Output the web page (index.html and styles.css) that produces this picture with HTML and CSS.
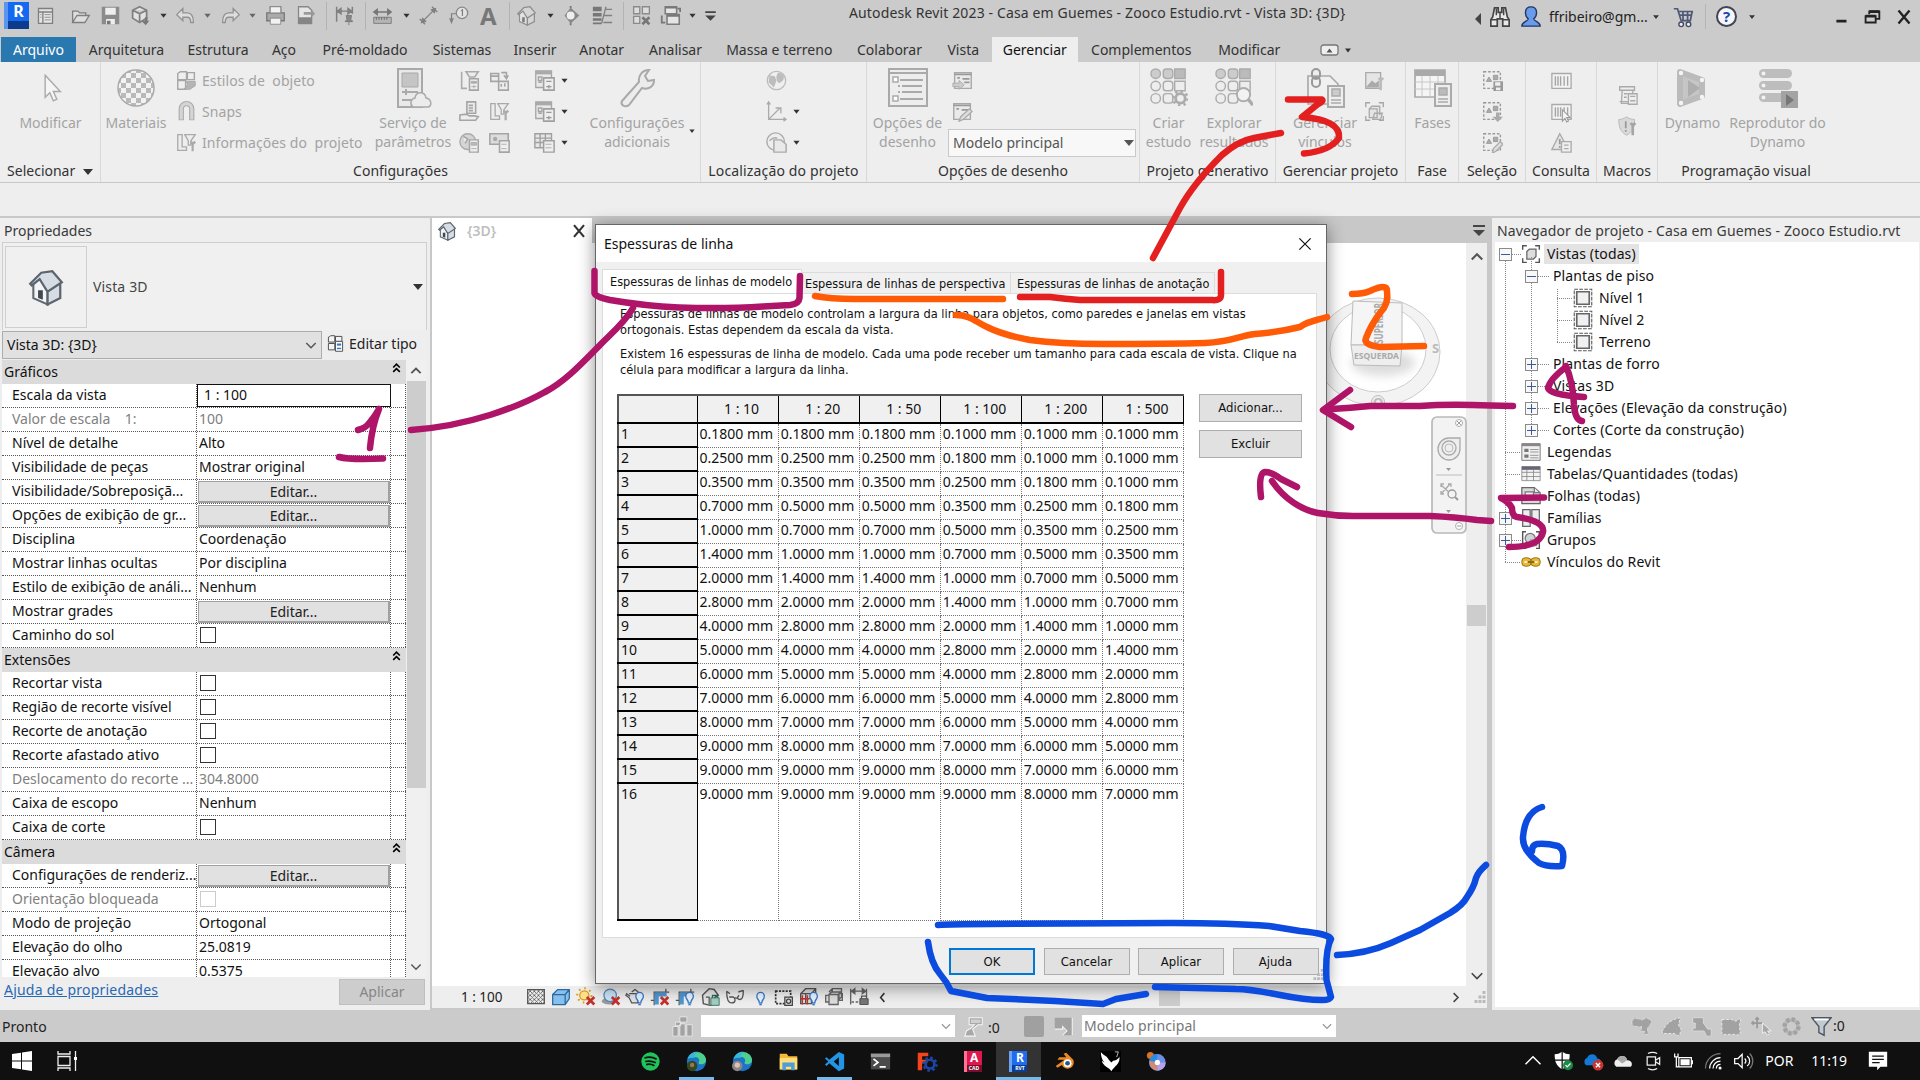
FILE: index.html
```html
<!DOCTYPE html>
<html lang="pt-BR">
<head>
<meta charset="utf-8">
<title>Autodesk Revit 2023</title>
<link rel="stylesheet" href="styles.css">
</head>
<body>
<svg class="sprite" aria-hidden="true">
  <symbol id="dd" viewBox="0 0 24 24"><path d="M8.500 10h7l-3.500 4.500z" fill="currentColor"/></symbol>
  <symbol id="props" viewBox="0 0 24 24"><path d="M4 4h16v17H4zM4 8h16M9 8v13" fill="#e4e4e4" stroke="#7f7f7f" stroke-width="1.500"/><path d="M11 11h7M11 14h7M11 17h7M6 11h1.500M6 14h1.500" stroke="#888"/></symbol>
  <symbol id="open" viewBox="0 0 24 24"><path d="M3 20V7h6l2 2h7v3M3 20l5-8h14l-5 8z" fill="#dedede" stroke="#7f7f7f" stroke-width="1.500"/></symbol>
  <symbol id="save" viewBox="0 0 24 24"><path d="M2 2h20v20H2z" fill="#8b8b8b"/><path d="M6 3h12v8H6zM7 16h10v6H7z" fill="#eee"/><path d="M8 18h4v4H8z" fill="#777"/></symbol>
  <symbol id="cube" viewBox="0 0 24 24"><path d="M11 2l8 4v9l-8 5-8-5V6zM3 6l8 4 8-4M11 10v10" fill="#e2e2e2" stroke="#808080" stroke-width="2"/><path d="M13 18h4v-4h3v4h2l-4 5z" fill="#777"/></symbol>
  <symbol id="undo" viewBox="0 0 24 24"><path d="M9 4L2 11l7 7v-4h5c3 0 4 2 4 6h3c0-8-2-11-7-11H9z" fill="#ddd" stroke="#929292" stroke-width="1.500"/></symbol>
  <symbol id="redo" viewBox="0 0 24 24"><path d="M15 4l7 7-7 7v-4h-5c-3 0-4 2-4 6H3c0-8 2-11 7-11h5z" fill="#ddd" stroke="#929292" stroke-width="1.500"/></symbol>
  <symbol id="print" viewBox="0 0 24 24"><path d="M6 9V2h12v7M2 9h20v9H2z" fill="#aaa" stroke="#777" stroke-width="1.500"/><path d="M6 2h12v7H6zM6 15h12v7H6z" fill="#f2f2f2" stroke="#888"/></symbol>
  <symbol id="pdf" viewBox="0 0 24 24"><path d="M4 2h11l4 4v15H4z" fill="#e5e5e5" stroke="#888" stroke-width="1.500"/><path d="M4 14h15v8H4z" fill="#858585"/><path d="M10 8h9V5l4 5-4 4v-3h-9z" fill="#9a9a9a"/></symbol>
  <symbol id="dimlock" viewBox="0 0 24 24"><path d="M3 2v17M21 2v8M4 7h16M4 7l4-3v6zM20 7l-4-3v6z" fill="#888" stroke="#808080" stroke-width="1.700"/><path d="M14 12h6l-1 6h2v1h-8v-1h2zM17 19v4" fill="#888" stroke="#777"/></symbol>
  <symbol id="ruler" viewBox="0 0 24 24"><path d="M2 8h20M2 8l4-3v6zM22 8l-4-3v6z" fill="#777" stroke="#777" stroke-width="1.500"/><path d="M2 14h20v7H2z" fill="#b5b5b5" stroke="#777"/><path d="M5 14v3M8 14v3M11 14v3M14 14v3M17 14v3" stroke="#666"/></symbol>
  <symbol id="diag" viewBox="0 0 24 24"><path d="M5 19L19 5M2 16l6 6M16 2l6 6" stroke="#808080" stroke-width="1.600"/><path d="M3 21l2-7 5 5zM21 3l-7 2 5 5z" fill="#808080"/></symbol>
  <symbol id="tag" viewBox="0 0 24 24"><circle cx="16" cy="9" r="6.500" fill="#e2e2e2" stroke="#888" stroke-width="1.500"/><path d="M15 6.500l1.500-1v7M9 10H4v9M2 15l2 5 2-5" fill="none" stroke="#808080" stroke-width="1.400"/></symbol>
  <symbol id="home" viewBox="0 0 24 24"><path d="M4 10v9l9 4 8-5v-8l-6-7-6 1z" fill="#cbd3dc"/><path d="M4 10v9l9 4v-8L8 6z" fill="#f2f4f6" stroke="#606870" stroke-width="1.300"/><path d="M2 10l7-7 7-1 6 7-9 6-5-8-5 4zM13 15v8l8-4V10" fill="#d6dde5" stroke="#5c656e" stroke-width="1.400"/><path d="M7 14h3v6l-3-1z" fill="#42484e"/></symbol>
  <symbol id="section" viewBox="0 0 24 24"><path d="M11 1v3M11 20v3" stroke="#777" stroke-width="2"/><path d="M4 12l7-9 10 9-10 9z" fill="#888"/><circle cx="11" cy="12" r="4.500" fill="#eee"/></symbol>
  <symbol id="thin" viewBox="0 0 24 24"><path d="M1 2h10v5H1zM1 9h10v4H1zM1 15h10v3H1zM1 20h10v2H1z" fill="#777"/><path d="M15 5h8M13 12h10M13 20h10M11 21l5-19" stroke="#808080" stroke-width="1.500" fill="none"/></symbol>
  <symbol id="wins" viewBox="0 0 24 24"><path d="M3 2h7v8H3zM13 2h8v8h-8zM3 13h7v8H3z" fill="#ddd" stroke="#8b8b8b" stroke-width="1.500"/><path d="M13 14l8 8M21 14l-8 8" stroke="#777" stroke-width="3"/></symbol>
  <symbol id="switch" viewBox="0 0 24 24"><path d="M6 2h13v8H6zM8 11h14v11H8z" fill="#e5e5e5" stroke="#7d7d7d" stroke-width="1.800"/><path d="M8 12.500h14M6 3h13M2 12v8h4M23 8V4h-3" stroke="#777" stroke-width="2" fill="none"/></symbol>
  <symbol id="custom" viewBox="0 0 24 24"><path d="M6 7h12v2H6zM6 12h12l-6 6z" fill="#444"/></symbol>
  <symbol id="arrow" viewBox="0 0 24 24"><path d="M7 1v19l4-4 3 7 3-1.500-3-6.500h6z" fill="#f5f5f5" stroke="#a9a9a9" stroke-width="1.200"/></symbol>
  <symbol id="ball" viewBox="0 0 40 40"><defs><pattern id="chk" width="10" height="10" patternUnits="userSpaceOnUse"><path d="M0 0h5v5H0zM5 5h5v5H5z" fill="#b9b9b9"/><path d="M5 0h5v5H5zM0 5h5v5H0z" fill="#f2f2f2"/></pattern></defs><circle cx="20" cy="20" r="18" fill="url(#chk)" stroke="#aaa" stroke-width="1.500"/></symbol>
  <symbol id="style" viewBox="0 0 24 24"><path d="M2 4l3-2h7v9H2zM13 3h8v8h-8zM2 12h9v10H2z" fill="#eee" stroke="#a5a5a5" stroke-width="1.600"/><path d="M12 13h10v5l-6 4H9l4-5z" fill="#b5b5b5" stroke="#a5a5a5"/></symbol>
  <symbol id="magnet" viewBox="0 0 24 24"><path d="M6 22V9a6 6 0 0 1 12 0v13" fill="none" stroke="#aaa" stroke-width="6"/><path d="M6 21V9a6 6 0 0 1 12 0v12" fill="none" stroke="#d5d5d5" stroke-width="3.500"/></symbol>
  <symbol id="info" viewBox="0 0 24 24"><path d="M2 3h5v14h5v4H2zM10 3h12l-5 7v5h-3v-5z" fill="#ededed" stroke="#aaa" stroke-width="1.500"/><path d="M19 11v11M17 11l2 3 3-3" stroke="#aaa" stroke-width="2.500" fill="none"/></symbol>
  <symbol id="server" viewBox="0 0 40 40"><path d="M5 1h24v38H5z" fill="#e9e9e9" stroke="#a9a9a9" stroke-width="2"/><path d="M9 5h16v14H9z" fill="#c5c5c5" stroke="#a9a9a9"/><path d="M9 24h16M9 32h10M13 21v6" stroke="#aaa" stroke-width="2"/><path d="M20 39a5 5 0 0 1 2-9c1-7 10-7 11 0 6 1 6 8 2 9z" fill="#ececec" stroke="#aaa" stroke-width="1.500"/></symbol>
  <symbol id="s1" viewBox="0 0 24 24"><path d="M3 2v19h6M8 2h14l-4 6h-6z" fill="#ededed" stroke="#aaa" stroke-width="1.800"/><path d="M12 10h10v13H12z" fill="#eee" stroke="#a5a5a5" stroke-width="1.800"/><path d="M14 13h6v2h-6zM14 19h6M17 17v4" stroke="#aaa" fill="#aaa"/></symbol>
  <symbol id="s2" viewBox="0 0 24 24"><path d="M2 4h9v9H2zM2 7h9M11 13h11v10H11zM14 16v3M18 15v4M14 3h6v6M17 6l3 4 2-4" fill="#ededed" stroke="#a5a5a5" stroke-width="1.800"/></symbol>
  <symbol id="s3" viewBox="0 0 24 24"><path d="M9 1h10v13H9zM11 5h5M11 8h5M11 11h5M1 16l7-1 4 2h6l4 1-3 4H1z" fill="#ededed" stroke="#a5a5a5" stroke-width="1.800"/></symbol>
  <symbol id="s4" viewBox="0 0 24 24"><circle cx="10" cy="11" r="9" fill="#d4d4d4" stroke="#aaa" stroke-width="1.500"/><path d="M5 5l5 3-3 5M12 9h10v14H12z" fill="#eee" stroke="#a5a5a5" stroke-width="1.700"/><path d="M14 12h6v3h-6zM14 19h6" stroke="#aaa" fill="#bbb"/></symbol>
  <symbol id="s5" viewBox="0 0 24 24"><path d="M1 2h21v12H1z" fill="#ddd" stroke="#a5a5a5" stroke-width="1.800"/><circle cx="7" cy="8" r="2.500" fill="#aaa"/><path d="M12 10h11v13H12z" fill="#eee" stroke="#a5a5a5" stroke-width="1.800"/><path d="M14 14h6M14 19h6" stroke="#aaa"/></symbol>
  <symbol id="s6" viewBox="0 0 24 24"><path d="M1 2h19v16H1zM1 7h19M7 2v16M13 2v16M1 12h19" fill="#e6e6e6" stroke="#a0a0a0" stroke-width="1.600"/><path d="M11 10h12v13H11z" fill="#eee" stroke="#a0a0a0" stroke-width="1.700"/><path d="M13 14h7M13 18h7" stroke="#aaa"/></symbol>
  <symbol id="s7" viewBox="0 0 24 24"><path d="M2 1h18v19H2z" fill="#e9e9e9" stroke="#a5a5a5" stroke-width="1.500"/><path d="M2 1h18v4H2z" fill="#aaa"/><path d="M5 8h4v4H5zM5 14h4" fill="none" stroke="#a5a5a5" stroke-width="1.500"/><path d="M11 9h12v14H11z" fill="#eee" stroke="#a0a0a0" stroke-width="1.800"/><path d="M14 13h6M14 19h6M17 17v4" stroke="#999" stroke-width="1.500"/></symbol>
  <symbol id="wrench" viewBox="0 0 40 40"><path d="M5 33l17-19c-1-6 3-12 10-12l-4 6 3 5 6-1c0 7-6 10-12 8L12 37c-4 3-9 0-7-4z" fill="#ececec" stroke="#a9a9a9" stroke-width="2"/></symbol>
  <symbol id="globe" viewBox="0 0 24 24"><circle cx="12" cy="12" r="10.500" fill="#efefef" stroke="#bbb" stroke-width="1.500"/><path d="M4 6l6 1 2 5-3 8-6-6zM14 3c9 1 8 9 1 12-4-3-4-9-1-12z" fill="#bdbdbd"/></symbol>
  <symbol id="axes" viewBox="0 0 24 24"><path d="M3 2v19h20M3 21L16 8M11 8h6v6M1 4l2-3 2 3M20 19l3 2-3 2" stroke="#aaa" stroke-width="1.500" fill="none"/></symbol>
  <symbol id="pospage" viewBox="0 0 24 24"><circle cx="11" cy="11" r="10" fill="#eee" stroke="#aaa" stroke-width="1.600"/><path d="M9 9h8l6 5v9H9zM4 10c4-4 6-4 9-3" fill="#e9e9e9" stroke="#aaa" stroke-width="1.700"/></symbol>
  <symbol id="optlist" viewBox="0 0 40 40"><path d="M1 1h38v37H1z" fill="#ededed" stroke="#a9a9a9" stroke-width="2"/><path d="M2 5h36" stroke="#aaa" stroke-width="2"/><path d="M5 9h5v5H5zM5 28h5v5H5z" fill="#fff" stroke="#aaa" stroke-width="1.500"/><path d="M12 12h23M14 18h20M14 24h20M12 31h23M10 18h2M10 24h2" stroke="#aaa" stroke-width="1.800"/></symbol>
  <symbol id="optin" viewBox="0 0 24 24"><path d="M3 3h19v18H3z" fill="#eaeaea" stroke="#a9a9a9" stroke-width="1.600"/><path d="M3 5h19M6 9h3M12 10h8M14 14h6" stroke="#999" stroke-width="2"/><path d="M1 15h7v-3l6 5-6 5v-3H1z" fill="#ccc" stroke="#aaa"/></symbol>
  <symbol id="optedit" viewBox="0 0 24 24"><path d="M2 3h19v18H2z" fill="#eaeaea" stroke="#a9a9a9" stroke-width="1.600"/><path d="M2 5h19M5 9h3M11 10h8" stroke="#999" stroke-width="2"/><path d="M8 23l2-5 10-9 3 3-10 9z" fill="#ddd" stroke="#aaa" stroke-width="1.500"/></symbol>
  <symbol id="nine" viewBox="0 0 40 40"><g fill="#ededed" stroke="#acacac" stroke-width="1.500"><circle cx="6" cy="6" r="5" fill="#ccc"/><rect x="14" y="1" width="10" height="10" rx="3" fill="#ccc"/><path d="M26 1h11v10H26z" fill="#bbb"/><circle cx="6" cy="19" r="5"/><rect x="14" y="14" width="10" height="10" rx="3"/><path d="M26 14h11v10H26z"/><circle cx="6" cy="32" r="5"/><rect x="14" y="27" width="10" height="10" rx="3"/></g></symbol>
  <symbol id="gear" viewBox="0 0 40 40"><circle cx="32" cy="32" r="5" fill="#eee" stroke="#acacac" stroke-width="3"/><circle cx="32" cy="32" r="7.500" fill="none" stroke="#acacac" stroke-width="3" stroke-dasharray="2.500 3.400"/></symbol>
  <symbol id="lens" viewBox="0 0 40 40"><circle cx="30" cy="28" r="7" fill="#f2f2f2" stroke="#acacac" stroke-width="2"/><path d="M35 33l5 6" stroke="#aaa" stroke-width="3.500"/></symbol>
  <symbol id="links" viewBox="0 0 40 40"><path d="M3 36V8h22l8 8v20z" fill="#f0f0f0" stroke="#aaa" stroke-width="1.700"/><rect x="7" y="1" width="8" height="10" rx="4" fill="none" stroke="#999" stroke-width="2"/><rect x="7" y="9" width="8" height="10" rx="4" fill="none" stroke="#999" stroke-width="2"/><path d="M23 18h16v21H23z" fill="#eee" stroke="#aaa" stroke-width="2"/><path d="M27 21h8v7h-8zM26 32h10M26 35h10" stroke="#aaa" stroke-width="1.500" fill="#ccc"/></symbol>
  <symbol id="pic" viewBox="0 0 24 24"><path d="M2 3h17v18H2z" fill="#e5e5e5" stroke="#aaa" stroke-width="1.500"/><path d="M2 20l7-8 4 3 4-3v8z" fill="#aaa"/><path d="M19 9v14M17 9l2 3 3-3" stroke="#bbb" stroke-width="3" fill="none"/></symbol>
  <symbol id="boxin" viewBox="0 0 24 24"><path d="M2 7V2h5M17 2h5v5M22 17v5h-5M7 22H2v-5" stroke="#a5a5a5" stroke-width="1.500" fill="none"/><path d="M6 9h9v10H6zM6 9l3-3h9v10M12 14h9l-2 7h-9z" fill="#e5e5e5" stroke="#aaa" stroke-width="1.500"/></symbol>
  <symbol id="phase" viewBox="0 0 40 40"><path d="M2 2h30v27H2z" fill="#f5f5f5" stroke="#aaa" stroke-width="1.700"/><path d="M2 2h30v6H2z" fill="#aaa"/><path d="M2 14h30M2 21h30M9 8v21M17 8v21M25 8v21" stroke="#c8c8c8"/><path d="M22 16h16v22H22z" fill="#eee" stroke="#aaa" stroke-width="2"/><path d="M26 20h8v7h-8zM25 31h10M25 34h10" fill="#bbb" stroke="#aaa" stroke-width="1.400"/></symbol>
  <symbol id="sel" viewBox="0 0 24 24"><path d="M2 2h19v19H2z" fill="none" stroke="#999" stroke-width="1.600" stroke-dasharray="3 2"/><path d="M5 13l3-5 3 5zM13 6h5v5h-5z" fill="#aaa" stroke="#999"/></symbol>
  <symbol id="selsave" viewBox="0 0 24 24"><path d="M13 13h11v11H13z" fill="#999"/><path d="M15 14h6v4h-6zM16 20h5v3h-5z" fill="#eee"/></symbol>
  <symbol id="seldown" viewBox="0 0 24 24"><path d="M16 13h4v5h4l-6 6-6-6h4z" fill="#aaa"/></symbol>
  <symbol id="seledit" viewBox="0 0 24 24"><path d="M12 24l1-5 8-8 3 3-8 8z" fill="#ddd" stroke="#aaa" stroke-width="1.500"/></symbol>
  <symbol id="bar" viewBox="0 0 24 24"><path d="M1 4h22v17H1z" fill="#f3f3f3" stroke="#aaa" stroke-width="1.500"/><path d="M5 7v11M8 7v11M11 7v11M15 7v11M19 7v11" stroke="#a5a5a5" stroke-width="1.600"/></symbol>
  <symbol id="warn" viewBox="0 0 24 24"><path d="M10 2l10 18H1z" fill="#e6e6e6" stroke="#aaa" stroke-width="1.600"/><path d="M10 8v6M10 16v2" stroke="#999" stroke-width="2"/><path d="M12 11h11v12H12z" fill="#eee" stroke="#aaa" stroke-width="1.500"/><path d="M15 15h5M15 19h5" stroke="#aaa" stroke-width="1.500"/></symbol>
  <symbol id="macro" viewBox="0 0 24 24"><path d="M3 2h17v4H3zM6 6l-1 15h10M18 6v5" fill="#eee" stroke="#aaa" stroke-width="1.500"/><path d="M13 10h10v12H13z" fill="#eee" stroke="#aaa" stroke-width="1.500"/><path d="M3 19h10M8 10h4M8 14h3M15 13h6M15 18h6" stroke="#aaa" stroke-width="1.700"/></symbol>
  <symbol id="shieldw" viewBox="0 0 24 24"><path d="M11 1c3 2 6 3 9 3 0 9-2 14-9 18C4 18 2 13 2 4c3 0 6-1 9-3z" fill="#d9d9d9" stroke="#b5b5b5"/><path d="M10 6v8M10 16v2" stroke="#999" stroke-width="2"/><path d="M18 8v14M15.500 8l2.500 3 3-3" stroke="#a5a5a5" stroke-width="3" fill="none"/></symbol>
  <symbol id="dynamo" viewBox="0 0 40 40"><path d="M7 4l22 8v16L7 36z" fill="#c6c6c6" stroke="#bbb" stroke-width="6" stroke-linejoin="round"/><path d="M15 12l12 8-12 9z" fill="#aeaeae"/><g fill="#f5f5f5"><circle cx="8" cy="5" r="2.200"/><circle cx="29" cy="12" r="2.200"/><circle cx="29" cy="29" r="2.200"/><circle cx="8" cy="35" r="2.200"/></g></symbol>
  <symbol id="player" viewBox="0 0 40 40"><g fill="#bdbdbd"><rect x="1" y="1" width="33" height="9" rx="4.500"/><rect x="1" y="13" width="33" height="9" rx="4.500"/><rect x="1" y="25" width="26" height="9" rx="4.500"/></g><g fill="#f2f2f2"><circle cx="5.500" cy="5.500" r="2"/><circle cx="5.500" cy="17.500" r="2"/><circle cx="5.500" cy="29.500" r="2"/></g><path d="M23 23h17v18H23z" fill="#a3a3a3"/><path d="M28 26l8 6-8 6z" fill="#777"/></symbol>
  <symbol id="bino" viewBox="0 0 24 24"><path d="M4 12L6 2h4v5h4V2h4l2 10 2 3v7h-7v-8H9v8H2v-7z" fill="#e8e8e8" stroke="#444" stroke-width="1.800"/><path d="M2 15h7M15 15h7M8 3v7M16 3v7M12 7v6" stroke="#444" stroke-width="1.600"/></symbol>
  <symbol id="user" viewBox="0 0 24 24"><path d="M12 1c8 0 7 10 3 13 0 3 7 3 7 8H2c0-5 7-5 7-8C5 11 4 1 12 1z" fill="#6a9bea" stroke="#223764" stroke-width="1.500"/></symbol>
  <symbol id="cart" viewBox="0 0 24 24"><path d="M2 3h4l4 13h10l2-10H7M9 10h12M12 6v10M17 6v10" fill="none" stroke="#4f5876" stroke-width="1.900"/><circle cx="10" cy="20" r="2.500" fill="#eee" stroke="#444b68" stroke-width="1.500"/><circle cx="18" cy="20" r="2.500" fill="#eee" stroke="#444b68" stroke-width="1.500"/></symbol>
  <symbol id="x" viewBox="0 0 24 24"><path d="M6 5l12 14M18 5L6 19" stroke="currentColor" stroke-width="2.600"/></symbol>
  <symbol id="min" viewBox="0 0 24 24"><path d="M7 15h11v3H7z" fill="#222"/></symbol>
  <symbol id="rest" viewBox="0 0 24 24"><path d="M9 9V6h11v8h-4M5 11h11v7H5z" fill="none" stroke="#222" stroke-width="2"/><path d="M5 11h11M9 6h11" stroke="#222" stroke-width="3"/></symbol>
  <symbol id="chevup2" viewBox="0 0 10 10"><path d="M2 5l3-3 3 3M2 9l3-3 3 3" fill="none" stroke="#000" stroke-width="1.500"/></symbol>
  <symbol id="up" viewBox="0 0 24 24"><path d="M5 16l7-7 7 7" fill="none" stroke="#555" stroke-width="2.800"/></symbol>
  <symbol id="down" viewBox="0 0 24 24"><path d="M5 9l7 7 7-7" fill="none" stroke="currentColor" stroke-width="2.200"/></symbol>
  <symbol id="etype" viewBox="0 0 24 24"><path d="M3 3l2-2h6v9H2V3zM12 2h9v7h-9zM2 12h9v9H2z" fill="#f4f4f4" stroke="#444" stroke-width="1.300"/><path d="M12 9h10v14H12z" fill="#fff" stroke="#555" stroke-width="1.400"/><path d="M14 12h6v3h-6z" fill="#3b78c4"/><path d="M14 19h6" stroke="#3b78c4" stroke-width="2"/></symbol>
  <symbol id="views" viewBox="0 0 24 24"><path d="M2 7V2h5M17 2h5v5M22 17v5h-5M7 22H2v-5" stroke="#555" stroke-width="1.700" fill="none"/><path d="M7 9l3-3h8v9l-3 3H7z" fill="#ddd" stroke="#666" stroke-width="1.500"/></symbol>
  <symbol id="plan" viewBox="0 0 24 24"><path d="M1.500 1.500h21v21h-21z" fill="none" stroke="#555" stroke-width="1.300" stroke-dasharray="4.500 1.500"/><path d="M4.500 4.500h15v15h-15z" fill="#f1f1f1" stroke="#666" stroke-width="2"/></symbol>
  <symbol id="legend" viewBox="0 0 24 24"><path d="M1 2h22v20H1z" fill="#efefef" stroke="#666"/><path d="M1 2h22v3H1z" fill="#888"/><path d="M4 8h5v4H4zM4 15h5v4H4z" fill="#777"/><path d="M11 9h10M11 12h10M11 16h10M11 19h10" stroke="#888"/></symbol>
  <symbol id="table" viewBox="0 0 24 24"><path d="M1 3h22v17H1zM1 10h22M1 15h22M7 7v13M15 7v13" fill="#f2f2f2" stroke="#888"/><path d="M1 3h22v4H1z" fill="#667"/></symbol>
  <symbol id="sheet" viewBox="0 0 24 24"><path d="M1 2h15l7 6v13H1z" fill="#d8dadd" stroke="#666" stroke-width="1.500"/><path d="M5 7h10v8H5zM16 2v6h6" fill="#eee" stroke="#777" stroke-width="1.500"/></symbol>
  <symbol id="fam" viewBox="0 0 24 24"><path d="M2 2h9v20H2zM13 2h9v14h-9z" fill="#eceef0" stroke="#666" stroke-width="1.500"/></symbol>
  <symbol id="group" viewBox="0 0 24 24"><path d="M6 2H2v20h4M18 2h4v20h-4" fill="none" stroke="#555" stroke-width="1.700"/><circle cx="11" cy="10" r="6" fill="#d0d4d8" stroke="#777" stroke-width="1.500"/><path d="M11 12h8v7h-8z" fill="#e2e4e6" stroke="#777"/></symbol>
  <symbol id="chain" viewBox="0 0 24 24"><rect x="1" y="7" width="11" height="10" rx="4" fill="#e9b935" stroke="#9a7412" stroke-width="1.200"/><rect x="12" y="7" width="11" height="10" rx="4" fill="#e9b935" stroke="#9a7412" stroke-width="1.200"/><path d="M4 12h4M16 12h4" stroke="#fff" stroke-width="2"/><path d="M8 12h8" stroke="#8d6a0e" stroke-width="2.500"/></symbol>
  <symbol id="v1" viewBox="0 0 24 24"><defs><pattern id="hx" width="5" height="5" patternUnits="userSpaceOnUse"><path d="M0 0l5 5M5 0L0 5" stroke="#555" stroke-width=".9"/></pattern></defs><path d="M2 3h20v17H2z" fill="url(#hx)" stroke="#555" stroke-width="1.500"/></symbol>
  <symbol id="v2" viewBox="0 0 24 24"><path d="M2 9l6-6h14v11l-5 7H2zM2 9h15v12M17 9l5-6" fill="#86bff0" stroke="#2c6a9c" stroke-width="1.500"/></symbol>
  <symbol id="redx" viewBox="0 0 24 24"><path d="M13 12l9 9M22 12l-9 9" stroke="#c3322c" stroke-width="3.200"/></symbol>
  <symbol id="sun" viewBox="0 0 24 24"><circle cx="10" cy="10" r="5.500" fill="#ffe189" stroke="#d99616" stroke-width="1.500"/><circle cx="10" cy="10" r="8.500" fill="none" stroke="#e0a01c" stroke-width="2.500" stroke-dasharray="2 4.600"/></symbol>
  <symbol id="shad" viewBox="0 0 24 24"><ellipse cx="10" cy="17" rx="9" ry="4" fill="#999"/><circle cx="11" cy="10" r="7.500" fill="#c9e3f8" stroke="#5687b5" stroke-width="1.500"/></symbol>
  <symbol id="pot" viewBox="0 0 24 24"><path d="M5 8h12l1 4-3 7H8l-3-6-4-3 1-2 4 3M8 6l4-3 4 3" fill="#e3e3e3" stroke="#555" stroke-width="1.500"/></symbol>
  <symbol id="bulb" viewBox="0 0 24 24"><path d="M16 19c0-4-3-4-3-8a4.500 4.500 0 0 1 9 0c0 4-3 4-3 8z" fill="#e5f2ff" stroke="#3b78c4" stroke-width="1.600"/><path d="M16 21h3" stroke="#3b78c4" stroke-width="2"/></symbol>
  <symbol id="crop" viewBox="0 0 24 24"><path d="M1 16h4M5 22V6h14V2M19 6h4" fill="none" stroke="#555" stroke-width="1.500"/><path d="M8 21V9h12" fill="none" stroke="#4c97d5" stroke-width="5"/></symbol>
  <symbol id="v9" viewBox="0 0 24 24"><path d="M2 5l4 3M2 5c0 8 1 14 6 14s5-5 2-7H5M11 14c2-2 3-1 4 0M22 4l-6 2M22 4c0 6-1 11-4 11s-4-3-1-5" fill="none" stroke="#555" stroke-width="1.600"/></symbol>
  <symbol id="lock" viewBox="0 0 24 24"><path d="M13 13h10v9H13z" fill="#a5cdbf" stroke="#28695a"/><path d="M15 13v-3h6v3" fill="none" stroke="#28695a" stroke-width="1.700"/></symbol>
  <symbol id="vset" viewBox="0 0 24 24"><path d="M2 5h18v15H2z" fill="#eee" stroke="#333" stroke-width="2" stroke-dasharray="2.500 1.500"/><path d="M13 12h9v10h-9z" fill="#ddd" stroke="#444" stroke-width="1.500"/><circle cx="17.500" cy="17" r="2.500" fill="none" stroke="#444" stroke-width="1.500"/></symbol>
  <symbol id="vdis" viewBox="0 0 24 24"><path d="M2 8l6-6h12v12l-5 6H2zM2 8h13v12M2 14h13M8 8v12M15 8l5-6" fill="#ddd" stroke="#555" stroke-width="1.600"/></symbol>
  <symbol id="vred" viewBox="0 0 24 24"><path d="M4 10v11M10 10v11M2 14h10" stroke="#c3322c" stroke-width="1.800"/></symbol>
  <symbol id="vboxes" viewBox="0 0 24 24"><path d="M6 6l4-4h11v10l-4 4M10 2v4h11M2 10h4v8H2zM18 8h4v8h-4zM6 9h11v12H6zM6 9l3-3h11l-3 3" fill="#ddd" stroke="#666" stroke-width="1.600"/></symbol>
  <symbol id="vdim" viewBox="0 0 24 24"><path d="M2 2v19M21 2v9M3 5h17M3 5l4-3v6zM20 5l-4-3v6z" fill="#555" stroke="#666" stroke-width="1.600"/><path d="M3 18h10" stroke="#666" stroke-width="1.600" stroke-dasharray="3 2"/><path d="M13 14h10v7H13z" fill="#777" stroke="#444"/><path d="M15 14v-3h6v3" fill="none" stroke="#555" stroke-width="1.500"/></symbol>
  <symbol id="vhome" viewBox="0 0 24 24"><path d="M3 10l8-8 6 1 5 7-4 2v8l-6 2-8-2z" fill="#e7e7e7" stroke="#555" stroke-width="1.700"/><path d="M7 12h4v9" fill="none" stroke="#555" stroke-width="1.500"/></symbol>
  <symbol id="grip" viewBox="0 0 12 12"><path d="M8.500 0h3v3h-3zM4.500 4.500h3v3h-3zM8.500 4.500h3v3h-3zM.5 9h3v3h-3zM4.500 9h3v3h-3zM8.500 9h3v3h-3z" fill="#b9b9b9"/></symbol>
  <symbol id="wset" viewBox="0 0 24 24"><path d="M1 12h6v11H1zM9 9h6v14H9zM17 10h6v13h-6zM9 1h8v6H9zM4 7h6v4H4z" fill="#a2a2a2" stroke="#f5f5f5" stroke-width=".8"/></symbol>
  <symbol id="req" viewBox="0 0 24 24"><path d="M7 2h15v8h-5l-6 5 3 8H2l2-6 5-3 4-4H7z" fill="#a8a8a8" stroke="#f8f8f8" stroke-width="1.200"/><path d="M9 4h11v4H9z" fill="#d0d0d0"/></symbol>
  <symbol id="blob" viewBox="0 0 24 24"><path d="M1 7c0-5 8-5 11-2 3-3 11-3 11 2 0 4-4 5-4 6v8h-4l1-3-4-1v-5H6C3 12 1 10 1 7z" fill="#a2a2a2" stroke="#eee" stroke-width=".7" stroke-dasharray="4 3"/></symbol>
  <symbol id="blob2" viewBox="0 0 24 24"><path d="M1 18C6 9 11 4 22 2l-2 9 3 4-2 8-6-3H2z" fill="#a2a2a2" stroke="#eee" stroke-width="1" stroke-dasharray="3 2"/></symbol>
  <symbol id="blob3" viewBox="0 0 24 24"><path d="M2 2h12v6l5 7h4v8h-5l-3-6H2v-3h3V8H2z" fill="#a2a2a2" stroke="#eee" stroke-width=".6"/></symbol>
  <symbol id="blob4" viewBox="0 0 24 24"><path d="M1 4h11l5 2 6-4-2 8 1 12-6-1H1z" fill="#a2a2a2" stroke="#eee" stroke-width="1" stroke-dasharray="3 2"/></symbol>
  <symbol id="move" viewBox="0 0 24 24"><path d="M7 2v12M1 8h12M5 4l2-2 2 2M3 6L1 8l2 2" fill="none" stroke="#999" stroke-width="2"/><path d="M13 8v12l3-2 3 4 2-2-2-3h4z" fill="#a8a8a8" stroke="#f5f5f5"/></symbol>
  <symbol id="funnel" viewBox="0 0 24 24"><path d="M1 2h22l-8 10v10l-6-3v-7z" fill="#c3c9d0" stroke="#4d5763" stroke-width="1.600"/><path d="M4 4h16" stroke="#fff" stroke-width="2"/></symbol>
  <symbol id="edge" viewBox="0 0 24 24"><circle cx="12" cy="12" r="11" fill="#1b74c9"/><path d="M2 9C4 2 13-2 20 4c4 4 4 10-1 11-3 1-6-1-4-3 1-4-3-6-6-5C6 7 3 8 2 9z" fill="#4ecf8f"/><path d="M2 9C4 3 9 0 14 1c-4 2-5 5-4 7-4-1-7 0-8 1z" fill="#35b7dd"/></symbol>
  <symbol id="wifi" viewBox="0 0 24 24"><path d="M3 21C3 11 11 3 21 3" fill="none" stroke="#777" stroke-width="1.500"/><path d="M8 21c0-7 6-13 13-13M12 21c0-5 4-9 9-9M16 21c0-3 2-5 5-5" fill="none" stroke="#fff" stroke-width="1.500"/><circle cx="20.500" cy="20.500" r="1.800" fill="#fff"/></symbol>
</svg>

<div class="app">
  <header class="titlebar">
    <div class="qat">
      <div class="logo-r"><b>R</b></div>
      <svg><use href="#props"/></svg><svg><use href="#open"/></svg><svg><use href="#save"/></svg><svg><use href="#cube"/></svg><svg class="dk"><use href="#dd"/></svg>
      <svg><use href="#undo"/></svg><svg><use href="#dd"/></svg><svg><use href="#redo"/></svg><svg><use href="#dd"/></svg><svg><use href="#print"/></svg><svg><use href="#pdf"/></svg>
      <i></i><svg><use href="#dimlock"/></svg><i></i><svg><use href="#ruler"/></svg><svg class="dk"><use href="#dd"/></svg><svg><use href="#diag"/></svg><svg><use href="#tag"/></svg><b class="bigA">A</b>
      <i></i><svg class="faded"><use href="#home"/></svg><svg class="dk"><use href="#dd"/></svg><svg><use href="#section"/></svg><svg><use href="#thin"/></svg><i></i><svg><use href="#wins"/></svg><svg><use href="#switch"/></svg><svg class="dk"><use href="#dd"/></svg><svg><use href="#custom"/></svg>
    </div>
    <div class="apptitle">Autodesk Revit 2023 - Casa em Guemes - Zooco Estudio.rvt - Vista 3D: {3D}</div>
    <div class="account">
      <svg class="dk"><path d="M8 12l6-6v12z" fill="#444"/></svg><svg><use href="#bino"/></svg><svg><use href="#user"/></svg><span>ffribeiro@gm...</span><svg class="dk"><use href="#dd"/></svg><svg><use href="#cart"/></svg><i></i><b class="help">?</b><svg class="dk"><use href="#dd"/></svg><svg><use href="#min"/></svg><svg><use href="#rest"/></svg><svg><use href="#x"/></svg>
    </div>
  </header>
  <nav class="tabs">
    <span class="file">Arquivo</span><span>Arquitetura</span><span>Estrutura</span><span>Aço</span><span>Pré-moldado</span><span>Sistemas</span><span>Inserir</span><span>Anotar</span><span>Analisar</span><span>Massa e terreno</span><span>Colaborar</span><span>Vista</span><span class="on">Gerenciar</span><span>Complementos</span><span>Modificar</span>
    <svg class="pill" viewBox="0 0 34 14"><rect x="1" y="1" width="17" height="10" rx="2.500" fill="#eee" stroke="#777" stroke-width="1.300"/><path d="M6.500 8.500l3-4 3 4z" fill="#555"/><path d="M25 4.500h6l-3 4z" fill="#333"/></svg>
  </nav>

  <section class="ribbon">
    <div class="panel p-sel"><div class="pb"><div class="big mod"><svg class="i32"><use href="#arrow"/></svg><span>Modificar</span></div></div><h6>Selecionar <svg class="tri" viewBox="0 0 10 6"><path d="M0 0h10L5 6z" fill="#333"/></svg></h6></div>
    <div class="panel p-conf"><div class="pb">
      <div class="big"><svg class="i40"><use href="#ball"/></svg><span>Materiais</span></div>
      <div class="col list"><p><svg><use href="#style"/></svg>Estilos de&nbsp; objeto</p><p><svg><use href="#magnet"/></svg>Snaps</p><p><svg><use href="#info"/></svg>Informações do&nbsp; projeto</p></div>
      <div class="big"><svg class="i40"><use href="#server"/></svg><span>Serviço de<br>parâmetros</span></div>
      <div class="ic6"><svg><use href="#s1"/></svg><svg><use href="#s2"/></svg><svg><use href="#s3"/></svg><svg><use href="#info"/></svg><svg><use href="#s4"/></svg><svg><use href="#s5"/></svg></div>
      <i class="vs"></i>
      <div class="ic6 dds"><svg><use href="#s7"/></svg><svg class="dk"><use href="#dd"/></svg><svg><use href="#s7"/></svg><svg class="dk"><use href="#dd"/></svg><svg><use href="#s6"/></svg><svg class="dk"><use href="#dd"/></svg></div>
      <div class="big cfg"><svg class="i40"><use href="#wrench"/></svg><span>Configurações<br>adicionais</span></div><svg class="dk mid"><use href="#dd"/></svg>
    </div><h6>Configurações</h6></div>
    <div class="panel p-loc"><div class="pb"><div class="ic6 dds"><svg><use href="#globe"/></svg><svg></svg><svg><use href="#axes"/></svg><svg class="dk"><use href="#dd"/></svg><svg><use href="#pospage"/></svg><svg class="dk"><use href="#dd"/></svg></div></div><h6>Localização do projeto</h6></div>
    <div class="panel p-opt"><div class="pb"><div class="big"><svg class="i40"><use href="#optlist"/></svg><span>Opções de<br>desenho</span></div><div class="col optcol"><svg><use href="#optin"/></svg><svg><use href="#optedit"/></svg><div class="combo">Modelo principal<svg class="tri" viewBox="0 0 10 6"><path d="M0 0h10L5 6z" fill="#555"/></svg></div></div></div><h6>Opções de desenho</h6></div>
    <div class="panel p-gen"><div class="pb"><div class="big"><svg class="i40"><use href="#nine"/><use href="#gear"/></svg><span>Criar<br>estudo</span></div><div class="big"><svg class="i40"><use href="#nine"/><use href="#lens"/></svg><span>Explorar<br>resultados</span></div></div><h6>Projeto generativo</h6></div>
    <div class="panel p-ger"><div class="pb"><div class="big"><svg class="i40"><use href="#links"/></svg><span>Gerenciar<br>vínculos</span></div><div class="ic3"><svg><use href="#pic"/></svg><svg><use href="#boxin"/></svg></div></div><h6>Gerenciar projeto</h6></div>
    <div class="panel p-fase"><div class="pb"><div class="big"><svg class="i40"><use href="#phase"/></svg><span>Fases</span></div></div><h6>Fase</h6></div>
    <div class="panel p-s"><div class="pb"><div class="ic3"><svg><use href="#sel"/><use href="#selsave"/></svg><svg><use href="#sel"/><use href="#seldown"/></svg><svg><use href="#sel"/><use href="#seledit"/></svg></div></div><h6>Seleção</h6></div>
    <div class="panel p-c"><div class="pb"><div class="ic3"><svg><use href="#bar"/></svg><svg viewBox="0 0 24 24"><use href="#bar"/><path d="M13 10v13l3-3 2 4 2-1-2-4h4z" fill="#f3f3f3" stroke="#999" stroke-width="1.200"/></svg><svg><use href="#warn"/></svg></div></div><h6>Consulta</h6></div>
    <div class="panel p-m"><div class="pb"><div class="ic3 two"><svg><use href="#macro"/></svg><svg><use href="#shieldw"/></svg></div></div><h6>Macros</h6></div>
    <div class="panel p-v"><div class="pb"><div class="big"><svg class="i40"><use href="#dynamo"/></svg><span>Dynamo</span></div><div class="big"><svg class="i40"><use href="#player"/></svg><span>Reprodutor do<br>Dynamo</span></div></div><h6>Programação visual</h6></div>
  </section>
  <div class="optbar"></div>

  <main class="work">
    <aside class="props">
      <h5>Propriedades</h5>
      <div class="type"><div class="thumb"><svg><use href="#home"/></svg></div><span>Vista 3D</span><svg class="tri" viewBox="0 0 10 6"><path d="M0 0h10L5 6z" fill="#333"/></svg></div>
      <div class="inst"><div class="sel">Vista 3D: {3D}<svg><use href="#down"/></svg></div><svg class="et"><use href="#etype"/></svg><span>Editar tipo</span></div>
      <div class="pscroll">
        <div class="rows">
          <div class="gh">Gráficos<svg><use href="#chevup2"/></svg></div>
          <div class="r"><span>Escala da vista</span><b class="edit">1 : 100</b><i></i></div>
          <div class="r off"><span>Valor de escala &nbsp;&nbsp; 1:</span><b>100</b><i></i></div>
          <div class="r"><span>Nível de detalhe</span><b>Alto</b><i></i></div>
          <div class="r"><span>Visibilidade de peças</span><b>Mostrar original</b><i></i></div>
          <div class="r"><span>Visibilidade/Sobreposiçã...</span><b><em>Editar...</em></b><i></i></div>
          <div class="r"><span>Opções de exibição de gr...</span><b><em>Editar...</em></b><i></i></div>
          <div class="r"><span>Disciplina</span><b>Coordenação</b><i></i></div>
          <div class="r"><span>Mostrar linhas ocultas</span><b>Por disciplina</b><i></i></div>
          <div class="r"><span>Estilo de exibição de análi...</span><b>Nenhum</b><i></i></div>
          <div class="r"><span>Mostrar grades</span><b><em>Editar...</em></b><i></i></div>
          <div class="r"><span>Caminho do sol</span><b><u></u></b><i></i></div>
          <div class="gh">Extensões<svg><use href="#chevup2"/></svg></div>
          <div class="r"><span>Recortar vista</span><b><u></u></b><i></i></div>
          <div class="r"><span>Região de recorte visível</span><b><u></u></b><i></i></div>
          <div class="r"><span>Recorte de anotação</span><b><u></u></b><i></i></div>
          <div class="r"><span>Recorte afastado ativo</span><b><u></u></b><i></i></div>
          <div class="r off"><span>Deslocamento do recorte ...</span><b>304.8000</b><i></i></div>
          <div class="r"><span>Caixa de escopo</span><b>Nenhum</b><i></i></div>
          <div class="r"><span>Caixa de corte</span><b><u></u></b><i></i></div>
          <div class="gh">Câmera<svg><use href="#chevup2"/></svg></div>
          <div class="r"><span>Configurações de renderiz...</span><b><em>Editar...</em></b><i></i></div>
          <div class="r off"><span>Orientação bloqueada</span><b><u></u></b><i></i></div>
          <div class="r"><span>Modo de projeção</span><b>Ortogonal</b><i></i></div>
          <div class="r"><span>Elevação do olho</span><b>25.0819</b><i></i></div>
          <div class="r"><span>Elevação alvo</span><b>0.5375</b><i></i></div>
        </div>
        <div class="sb"><svg><use href="#up"/></svg><div class="th"></div><svg><use href="#down"/></svg></div>
      </div>
      <div class="pfoot"><a>Ajuda de propriedades</a><button>Aplicar</button></div>
    </aside>

    <section class="view">
      <div class="vtabs"><div class="vtab"><svg><use href="#home"/></svg><span>{3D}</span><svg class="vx"><use href="#x"/></svg></div><svg class="more"><use href="#custom"/></svg></div>
      <div class="canvas">
        <div class="draw">
          <svg class="viewcube" viewBox="0 0 130 115">
            <ellipse cx="61" cy="57" rx="62" ry="54" fill="#f3f3f3" stroke="#ccc"/><ellipse cx="61" cy="54" rx="48" ry="43" fill="#fff" stroke="#ccc"/>
            <ellipse cx="66" cy="68" rx="32" ry="13" fill="#ddd" class="soft"/>
            <path d="M36 6l49 2v42H34z" fill="#f5f5f5" stroke="#bbb"/><path d="M34 50h51l-2 21-46-1z" fill="#eee" stroke="#bbb"/>
            <text class="ct up" transform="translate(66 49) rotate(-90)" textLength="41" lengthAdjust="spacingAndGlyphs">SUPERIOR</text><text class="ct" x="37" y="64" textLength="45" lengthAdjust="spacingAndGlyphs">ESQUERDA</text>
            <text class="cp" x="115" y="58">S</text><circle cx="61" cy="107" r="6.500" fill="#eee" stroke="#bbb"/><text class="cp" x="56" y="112">O</text>
          </svg>
          <svg class="navbar" viewBox="0 0 36 118"><rect x="1" y="1" width="34" height="116" rx="5" fill="#f3f3f3" stroke="#b9b9b9" stroke-width="1.700"/><circle cx="28" cy="7" r="3.500" fill="#fff" stroke="#b0b0b0"/><path d="M26 5l4 4M30 5l-4 4" stroke="#999"/><path d="M18 22h11v11a11 11 0 1 1-11-11z" fill="#eee" stroke="#aaa" stroke-width="1.300"/><circle cx="18" cy="32" r="7" fill="none" stroke="#aaa" stroke-width="1.300"/><circle cx="18" cy="32" r="4" fill="none" stroke="#bbb"/><path d="M15 52h5l-2.500 3zM15 94h5l-2.500 3z" fill="#999"/><path d="M5 59h26" stroke="#bbb"/><path d="M10 69l10 9M19 68l-9 10M10 71v-3h3M17 68h3v3M10 75v3h3" stroke="#aaa" fill="none" stroke-width="1.300"/><circle cx="21" cy="78" r="4" fill="#f3f3f3" stroke="#999" stroke-width="1.300"/><path d="M24 81l3 3" stroke="#999" stroke-width="2"/><circle cx="28" cy="110" r="3.500" fill="#fff" stroke="#b0b0b0"/><path d="M26 110h4" stroke="#999"/></svg>
        </div>
        <div class="vsb"><svg><use href="#up"/></svg><div></div><svg><use href="#down"/></svg></div>
      </div>
      <div class="vcb">
        <span>1 : 100</span>
        <div class="vic"><svg><use href="#v1"/></svg><svg><use href="#v2"/></svg><svg><use href="#sun"/><use href="#redx"/></svg><svg><use href="#shad"/><use href="#redx"/></svg><svg><use href="#pot"/><use href="#bulb"/></svg><svg><use href="#crop"/><use href="#redx"/></svg><svg><use href="#crop"/><use href="#bulb"/></svg><svg><use href="#vhome"/><use href="#lock"/></svg><svg><use href="#v9"/></svg><svg class="bl"><use href="#bulb"/></svg><svg><use href="#vset"/></svg><svg><use href="#vdis"/><use href="#vred"/><use href="#bulb"/></svg><svg><use href="#vboxes"/></svg><svg><use href="#vdim"/></svg></div>
        <svg class="ch" viewBox="0 0 24 24"><path d="M15 5l-6 7 6 7" fill="none" stroke="#333" stroke-width="2.500"/></svg>
        <div class="hth"></div>
        <svg class="ch" viewBox="0 0 24 24"><path d="M9 5l7 7-7 7" fill="none" stroke="#444" stroke-width="2.500"/></svg><svg class="grip"><use href="#grip"/></svg>
      </div>
    </section>

    <aside class="browser">
      <h5>Navegador de projeto - Casa em Guemes - Zooco Estudio.rvt</h5>
      <ul class="tree">
        <li class="l0"><s class="m"></s><svg><use href="#views"/></svg><span class="hl">Vistas (todas)</span></li>
        <li class="l1"><s class="m"></s><span>Plantas de piso</span></li>
        <li class="l2"><svg><use href="#plan"/></svg><span>Nível 1</span></li>
        <li class="l2"><svg><use href="#plan"/></svg><span>Nível 2</span></li>
        <li class="l2"><svg><use href="#plan"/></svg><span>Terreno</span></li>
        <li class="l1"><s></s><span>Plantas de forro</span></li>
        <li class="l1"><s></s><span>Vistas 3D</span></li>
        <li class="l1"><s></s><span>Elevações (Elevação da construção)</span></li>
        <li class="l1"><s></s><span>Cortes (Corte da construção)</span></li>
        <li class="l0 leaf"><svg><use href="#legend"/></svg><span>Legendas</span></li>
        <li class="l0 leaf"><svg><use href="#table"/></svg><span>Tabelas/Quantidades (todas)</span></li>
        <li class="l0 leaf"><svg><use href="#sheet"/></svg><span>Folhas (todas)</span></li>
        <li class="l0"><s></s><svg><use href="#fam"/></svg><span>Famílias</span></li>
        <li class="l0"><s></s><svg><use href="#group"/></svg><span>Grupos</span></li>
        <li class="l0 leaf"><svg><use href="#chain"/></svg><span>Vínculos do Revit</span></li>
      </ul>
      <svg class="guides" viewBox="0 0 80 330"><path d="M10.500 18v302M36.500 14v132M62.500 46v54M17 11.500h10M43 33.500h12M62 55.500h16M62 77.500h16M62 99.500h16M43 121.500h12M43 143.500h12M43 165.500h12M43 187.500h12M36.500 40v146M10 209.500h16M10 231.500h16M10 253.500h16M17 275.500h10M17 297.500h10M10 319.500h16" fill="none" stroke="#888" stroke-dasharray="1 1"/></svg>
    </aside>
  </main>

  <footer class="status">
    <span class="ready">Pronto</span>
    <svg><use href="#wset"/></svg><div class="cb"><svg><use href="#down"/></svg></div><svg class="g1"><use href="#req"/></svg><span class="n0">:0</span><div class="sq"></div><svg viewBox="0 0 24 24"><path d="M2 2h20v20H12l3-5-4-5v3H2z" fill="#a2a2a2"/><path d="M22 2v20M2 15h9v-3l5 5-5 5" fill="none" stroke="#f5f5f5" stroke-width="1.200"/></svg><div class="cb two">Modelo principal<svg><use href="#down"/></svg></div>
    <div class="sr"><svg><use href="#blob"/></svg><svg><use href="#blob2"/></svg><svg><use href="#blob3"/></svg><svg><use href="#blob4"/></svg><svg><use href="#move"/></svg><svg viewBox="0 0 24 24"><circle cx="12" cy="12" r="7.500" fill="none" stroke="#b5b5b5" stroke-width="4"/><circle cx="12" cy="12" r="8" fill="none" stroke="#a2a2a2" stroke-width="5" stroke-dasharray="3.500 2.780"/></svg><svg><use href="#funnel"/></svg><span>:0</span></div>
  </footer>

  <footer class="taskbar">
    <div class="start"><svg viewBox="0 0 20 20"><path d="M0 3l9-1.300V9.500H0zM10 1.500L20 0v9.500H10zM0 10.500h9v7.800L0 17zM10 10.500h10V20l-10-1.500z" fill="#fff"/></svg><svg viewBox="0 0 20 20"><path d="M1 0v3h12V0M1 20v-3h12v3M1 5.500h12v9H1zM18.500 0v20" fill="none" stroke="#eee" stroke-width="1.300"/><path d="M17 6h3v3h-3z" fill="#fff"/></svg></div>
    <div class="apps">
      <div><svg viewBox="0 0 24 24"><circle cx="12" cy="12" r="10.500" fill="#1fc55b"/><path d="M5 8c5-1.500 10-1 14 1.500M6 12c4-1 8-.7 12 1.500M7 15.500c3-.8 6.500-.4 9.500 1.300" fill="none" stroke="#111" stroke-width="2"/></svg></div>
      <div class="run"><svg viewBox="0 0 24 24"><use href="#edge"/><circle cx="7" cy="17" r="6" fill="#35471e"/><circle cx="7" cy="16" r="2.500" fill="#9a7550"/></svg></div>
      <div><svg viewBox="0 0 24 24"><use href="#edge"/><circle cx="6" cy="17" r="6" fill="#8d8585"/><circle cx="6" cy="16" r="3" fill="#dfc2b6"/></svg></div>
      <div><svg viewBox="0 0 24 24"><path d="M2 3h8l2 3h10v15H2z" fill="#f4b938"/><path d="M2 8h20v13H2z" fill="#ffdd78"/><path d="M5 22v-9h14v9h-4v-4H9v4z" fill="#4b9ddc"/></svg></div>
      <div class="run"><svg viewBox="0 0 24 24"><path d="M17 1l6 3v16l-6 3L6 14l-3 3-2-1.500L5 12 1 8.500 3 7l3 3zM17 7l-6 5 6 5z" fill="#2495e6" fill-rule="evenodd"/></svg></div>
      <div><svg viewBox="0 0 24 24"><path d="M1 3h22v18H1z" fill="#4b4b4b"/><path d="M1 3h22v4H1z" fill="#999"/><path d="M4 9l5 4-5 4M11 18h7" fill="none" stroke="#fff" stroke-width="2"/></svg></div>
      <div><svg viewBox="0 0 24 24"><path d="M2 2h12v4H7v4h6v4H7v8H2z" fill="#f4441c"/><circle cx="16" cy="15" r="5" fill="none" stroke="#1d46a8" stroke-width="3"/><circle cx="16" cy="15" r="7.500" fill="none" stroke="#1d46a8" stroke-width="2.500" stroke-dasharray="3 2.890"/></svg></div>
      <div><div class="ad red"><b>A</b><small>CAD</small></div></div>
      <div class="run on"><div class="ad blue"><b>R</b><small>RVT</small></div></div>
      <div><svg viewBox="0 0 24 24"><path d="M2 17l10-7H4l2-3h8l-3-4 3-1 8 8a7 7 0 1 1-13 6l-5 3z" fill="#ee8a22"/><circle cx="15.500" cy="14" r="4.500" fill="#fff"/><circle cx="15.500" cy="14" r="2.700" fill="#22568f"/></svg></div>
      <div><svg viewBox="0 0 24 24"><path d="M0 0h24v24H0z" fill="#000"/><path d="M1 1c4 5 7 4 9 9l3 3 2-2c4 0 7-3 7-5 2 8-6 12-9 17-2-4-10-6-11-12l3 2c-3-3-4-8-4-12z" fill="#fff"/><path d="M17 1h4l-2 6" fill="none" stroke="#ccc"/></svg></div>
      <div><svg viewBox="0 0 24 24"><circle cx="5" cy="5" r="4" fill="#d87524"/><circle cx="13" cy="13" r="9.500" fill="#6d8fe6"/><path d="M13 3.500a9.500 9.500 0 0 0-9.500 9.500H13z" fill="#2a8ce0"/><path d="M13 22.500A9.500 9.500 0 0 1 4 11l9 2z" fill="#d08a75"/><path d="M22.500 13A9.500 9.500 0 0 1 13 22.500V13z" fill="#b6a0e8"/><circle cx="13" cy="13" r="3" fill="#fff"/></svg></div>
    </div>
    <div class="tray">
      <svg viewBox="0 0 24 24"><path d="M3 16l9-9 9 9" fill="none" stroke="#fff" stroke-width="1.700"/></svg>
      <svg viewBox="0 0 24 24"><path d="M11 1c3 2 6 3 9 3 0 9-2 14-9 18C4 18 2 13 2 4c3 0 6-1 9-3z" fill="#fff"/><path d="M11 1v21M2 11h18" stroke="#111" stroke-width="1.500"/><circle cx="18" cy="17" r="6" fill="#1b8a45"/><path d="M15 17l2 2 4-4" stroke="#fff" fill="none" stroke-width="1.500"/></svg>
      <svg viewBox="0 0 24 24"><path d="M4 17a5 5 0 0 1 1-9c3-6 11-5 12 1 6 0 6 8 2 8z" fill="#1478d4"/><circle cx="18" cy="17" r="6.500" fill="#c7372f"/><path d="M15.500 14.500l5 5M20.500 14.500l-5 5" stroke="#fff" stroke-width="1.600"/></svg>
      <svg viewBox="0 0 24 24"><path d="M4 19a5 5 0 0 1 1-9c3-6 11-5 12 1 7 0 7 8 3 8z" fill="#eee"/><path d="M5 10c3-6 11-5 12 1l-6 4z" fill="#aaa"/></svg>
      <svg viewBox="0 0 24 24"><path d="M5 7h10v10H5zM15 11l5-3v8l-5-3M6 3c3-2 8-2 11 0M6 21c3 2 8 2 11 0" fill="none" stroke="#eee" stroke-width="1.500"/></svg>
      <svg viewBox="0 0 24 24"><path d="M7 8h15v11H7zM2 3v4h4V3M4 7v12h3" fill="none" stroke="#fff" stroke-width="1.500"/><path d="M9 10h11v7H9zM22 11h2v5h-2z" fill="#fff"/></svg>
      <svg viewBox="0 0 24 24"><use href="#wifi"/></svg>
      <svg viewBox="0 0 24 24"><path d="M2 9h4l5-5v16l-5-5H2zM14 9c2 2 2 4 0 6M17 6c4 3 4 9 0 12" fill="none" stroke="#fff" stroke-width="1.500"/><path d="M20 3c5 5 5 13 0 18" fill="none" stroke="#777" stroke-width="1.500"/></svg>
      <span class="por">POR</span><span class="clk">11:19</span>
      <svg viewBox="0 0 24 24"><path d="M1 1h22v18h-8l-4 4v-4H1z" fill="#fff"/><path d="M5 6h14M5 10h14M5 14h9" stroke="#111" stroke-width="1.500"/></svg>
    </div>
  </footer>
</div>

<div class="dialog">
  <div class="dt"><span>Espessuras de linha</span><svg viewBox="0 0 24 24"><path d="M4.500 4.500l15 15M19.500 4.500l-15 15" stroke="#111" stroke-width="1.600"/></svg></div>
  <div class="dtabs"><span class="on">Espessuras de linhas de modelo</span><span>Espessura de linhas de perspectiva</span><span>Espessuras de linhas de anotação</span></div>
  <div class="page">
    <p>Espessuras de linhas de modelo controlam a largura da linha para objetos, como paredes e janelas em vistas<br>ortogonais. Estas dependem da escala da vista.</p>
    <p>Existem 16 espessuras de linha de modelo. Cada uma pode receber um tamanho para cada escala de vista. Clique na<br>célula para modificar a largura da linha.</p>
    <div class="gridrow">
      <table>
        <thead><tr><th></th><th>1 : 10</th><th>1 : 20</th><th>1 : 50</th><th>1 : 100</th><th>1 : 200</th><th>1 : 500</th></tr></thead>
        <tbody>
        <tr><th>1<td>0.1800 mm<td>0.1800 mm<td>0.1800 mm<td>0.1000 mm<td>0.1000 mm<td>0.1000 mm
        <tr><th>2<td>0.2500 mm<td>0.2500 mm<td>0.2500 mm<td>0.1800 mm<td>0.1000 mm<td>0.1000 mm
        <tr><th>3<td>0.3500 mm<td>0.3500 mm<td>0.3500 mm<td>0.2500 mm<td>0.1800 mm<td>0.1000 mm
        <tr><th>4<td>0.7000 mm<td>0.5000 mm<td>0.5000 mm<td>0.3500 mm<td>0.2500 mm<td>0.1800 mm
        <tr><th>5<td>1.0000 mm<td>0.7000 mm<td>0.7000 mm<td>0.5000 mm<td>0.3500 mm<td>0.2500 mm
        <tr><th>6<td>1.4000 mm<td>1.0000 mm<td>1.0000 mm<td>0.7000 mm<td>0.5000 mm<td>0.3500 mm
        <tr><th>7<td>2.0000 mm<td>1.4000 mm<td>1.4000 mm<td>1.0000 mm<td>0.7000 mm<td>0.5000 mm
        <tr><th>8<td>2.8000 mm<td>2.0000 mm<td>2.0000 mm<td>1.4000 mm<td>1.0000 mm<td>0.7000 mm
        <tr><th>9<td>4.0000 mm<td>2.8000 mm<td>2.8000 mm<td>2.0000 mm<td>1.4000 mm<td>1.0000 mm
        <tr><th>10<td>5.0000 mm<td>4.0000 mm<td>4.0000 mm<td>2.8000 mm<td>2.0000 mm<td>1.4000 mm
        <tr><th>11<td>6.0000 mm<td>5.0000 mm<td>5.0000 mm<td>4.0000 mm<td>2.8000 mm<td>2.0000 mm
        <tr><th>12<td>7.0000 mm<td>6.0000 mm<td>6.0000 mm<td>5.0000 mm<td>4.0000 mm<td>2.8000 mm
        <tr><th>13<td>8.0000 mm<td>7.0000 mm<td>7.0000 mm<td>6.0000 mm<td>5.0000 mm<td>4.0000 mm
        <tr><th>14<td>9.0000 mm<td>8.0000 mm<td>8.0000 mm<td>7.0000 mm<td>6.0000 mm<td>5.0000 mm
        <tr><th>15<td>9.0000 mm<td>9.0000 mm<td>9.0000 mm<td>8.0000 mm<td>7.0000 mm<td>6.0000 mm
        <tr class="last"><th>16<td>9.0000 mm<td>9.0000 mm<td>9.0000 mm<td>9.0000 mm<td>8.0000 mm<td>7.0000 mm
        </tbody>
      </table>
      <div class="side"><button>Adicionar...</button><button>Excluir</button></div>
    </div>
  </div>
  <div class="dfoot"><button class="def">OK</button><button>Cancelar</button><button>Aplicar</button><button>Ajuda</button></div>
  <svg class="dgrip"><use href="#grip"/></svg>
</div>

<svg class="ink" viewBox="0 0 1920 1080">
  <g stroke="#ae1568">
    <path d="M594.500 271V293Q595 297 610 300Q645 306 679 307.500Q725 309 763 306.500L790 305Q799 304 799.500 298L800 276"/>
    <path d="M633 308C625 322 612 333 602 343C583 362 566 381 545 392C520 406 470 426 411 430"/>
    <path d="M358 430Q366 428 370 422Q375 416 379 409Q372 426 370 448"/><path d="M339 457Q350 460 383 458.500"/>
    <path d="M1350 390L1323 410L1351 427"/><path d="M1332 409Q1350 408 1370 406H1420Q1447 404 1490 405.500L1513 406"/>
    <path d="M1566 367Q1550 379 1548 388Q1550 395 1584 397"/><path d="M1566 366Q1573 382 1574 405Q1575 420 1582 421"/>
    <path d="M1261 497Q1258 473 1265 472Q1272 472 1281 479L1297 487"/><path d="M1272 481C1284 499 1302 510 1318 513Q1335 516 1353 516H1430Q1455 517 1477 520L1491 521"/>
    <path d="M1544 497.500L1501 498Q1509 502 1512 508Q1512 516 1517 517Q1545 521 1543 532Q1540 547 1509 547"/>
  </g>
  <g stroke="#ff5a05">
    <path d="M815 296Q830 299 855 299H1003"/>
    <path d="M956 315C970 315 976 322 987 327Q1003 335 1030 340Q1060 344 1103 344Q1170 344 1205 343C1232 342 1238 336 1255 334Q1280 332 1300 327C1307 322 1310 322 1327 317"/>
    <path d="M1352 294Q1363 294 1370 291Q1387 283 1387 291Q1389 304 1380 313Q1371 325 1366 338Q1363 345 1380 347L1424 346"/>
  </g>
  <g stroke="#e31f1f">
    <path d="M1020 297H1050Q1066 299 1080 300H1212Q1221 301 1221 295V272"/>
    <path d="M1281 133L1254 138Q1238 141 1222 155C1203 174 1190 190 1180 208L1153 258"/>
    <path d="M1288 99.500H1322Q1324 101 1318 104L1302 117Q1341 120 1339 138Q1330 151 1304 153.500"/>
  </g>
  <g stroke="#0b4be0">
    <path d="M928 942C930 957 934 967 940 974Q947 982 951 991L987 998L1055 1001L1103 1004L1116 999L1146 994"/>
    <path d="M938 925Q950 924 990 924L1172 923Q1230 923 1269 926L1300 931Q1330 934 1331 939Q1325 950 1326.500 980L1331 997Q1330 1000 1322 1000Q1305 1000 1280 995Q1250 989 1236 989L1155 987"/>
    <path d="M1337 955C1360 954 1375 950 1391 943L1420 930L1450 913Q1463 905 1467 897Q1474 887 1476 878Q1478 872 1486 865"/>
    <path d="M1542 807C1528 811 1524 826 1523 837Q1522 850 1539 863Q1546 867 1562 866Q1566 850 1558 846Q1546 843 1537 844Q1532 845 1532 851"/>
  </g>
</svg>
</body>
</html>
```
FILE: styles.css
```css
*{box-sizing:border-box}
body{margin:0;width:1920px;height:1080px;overflow:hidden;background:#cbcbcb;color:#1c1c1c;font:14px/20px "Noto Sans","Open Sans",sans-serif;position:relative}
svg{display:block;width:24px;height:24px;flex:none;overflow:visible}
.sprite{position:absolute;width:0;height:0}
h5,h6,p,ul{margin:0;padding:0;font-weight:400}
i{font-style:normal}
button{font:inherit;padding:0;color:#111}
.tri{width:10px;height:6px}
.dk{color:#333}
.app{display:flex;flex-direction:column;height:1080px}

/* title bar */
.titlebar{height:37px;display:flex;background:#cbcbcb;flex:none}
.qat{width:849px;height:31px;padding-left:4px;display:grid;align-items:center;grid-template-columns:30px 35px 30px 30px 23px 22px 22px 23px 22px 23px 30px 20px 19px 20px 18px 24px 22px 30px 30px 20px 18px 24px 21px 31px 20px 19px 29px 22px 18px 24px;color:#666}
.qat>svg{width:21px;height:21px;margin-left:1px}
.qat>i{width:1px;height:28px;background:#b3b3b3;margin-left:12px}
.faded{filter:grayscale(1) opacity(.6)}
.logo-r{width:25px;height:27px;background:linear-gradient(#1568f0 0 70%,#0a3b8c 70%);border-left:4px solid #5c95ec;color:#fff;font-size:16px;line-height:18px;text-align:center}
.bigA{font-size:24px;line-height:28px;color:#777;padding-left:3px}
.apptitle{width:618px;font-size:14px;line-height:26px;letter-spacing:.135px;color:#333;white-space:nowrap}
.account{height:31px;display:grid;align-items:center;grid-template-columns:22px 31px 29px 97px 26px 22px 22px 26px 88px 31px 32px 24px;margin-top:1px;color:#222}
.account svg{width:22px;height:22px}
.account .dk{width:20px;height:20px}
.account i{width:1px;height:25px;background:#b5b5b5;margin-left:11px}
.account span{white-space:nowrap}
.help{width:21px;height:21px;border:2px solid #445;border-radius:50%;background:#f4f6fb;color:#2147a8;font-size:15px;line-height:17px;text-align:center}

/* ribbon */
.tabs{height:25px;flex:none;display:grid;grid-template-columns:76px 101px 82px 50px 112px 82px 64px 69.500px 78px 129.500px 91px 56.500px 86.500px 126.500px 89.500px 60px;line-height:26px;text-align:center;color:#333}
.tabs .file{background:#2a78b0;color:#fff;margin-left:1px}
.tabs .on{background:#eee;color:#111}
.pill{width:34px;height:14px;margin:7px 0 0 26px}

.ribbon{height:121px;flex:none;display:flex;background:#eee;border-bottom:1px solid #c8c8c8;color:#a3a3a3}
.panel{border-right:1px solid #d8d8d8;display:flex;flex-direction:column;flex:none}
.panel h6{font-size:14px;line-height:22px;height:22px;color:#333;text-align:center;white-space:nowrap}
.panel h6 .tri{display:inline-block;vertical-align:middle;margin-left:4px}
.pb{height:98px;display:flex;padding-top:6px}
.p-sel{width:101px}.p-conf{width:600px}.p-loc{width:166px}.p-opt{width:273px}.p-gen{width:136px}.p-ger{width:130px}.p-fase{width:53px}.p-s{width:67px}.p-c{width:71px}.p-m{width:61px}.p-v{width:176px;border:0}
.p-loc h6{letter-spacing:.15px}
.big{display:flex;flex-direction:column;align-items:center;text-align:center;white-space:nowrap;width:70px;flex:none}
.big span{line-height:19px;margin-top:5px}
.i40{width:40px;height:40px}
.i32{width:28px;height:28px;margin:6px 0}
.mod{width:101px}
.col p{display:flex;align-items:center;gap:5px;height:31px;white-space:nowrap;letter-spacing:.08px}
.col p svg{width:21px;height:21px}
.list{width:203px;flex:none;padding:0 0 0 5px;margin-top:-3px}
.p-conf .big:nth-of-type(3){width:78px}
.ic6{display:grid;grid-template-columns:30px 30px;grid-auto-rows:31px;padding-left:7px;margin-top:1px;width:69px;flex:none}
.ic6 svg,.ic3 svg,.optcol>svg{width:21px;height:21px;margin-top:1px}
.vs{width:1px;height:90px;background:#d0d0d0;margin-top:-3px}
.dds{grid-template-columns:20px 24px;padding-left:13px;width:62px}
.p-loc .dds{margin-left:52px}
.p-conf .cfg{width:108px}
.mid{margin:51px 0 0 -8px;width:18px}
.p-opt .big{width:81px}
.optcol{display:grid;grid-template-rows:31px 31px 28px;margin-top:1px}
.optcol>svg{margin-left:4px}
.combo{width:188px;height:28px;margin-top:-2px;border:1px solid #c9c9c9;background:#f8f8f8;color:#555;display:flex;align-items:center;justify-content:space-between;padding:0 1px 0 4px}
.p-gen .big:first-child{width:57px}.p-gen .big{width:74px}
.p-gen .big .i40{width:38px;height:38px;margin-bottom:2px}
.p-ger .big{width:98px}
.ic3{display:grid;grid-auto-rows:31px;justify-items:center;width:100%;margin-top:1px}
.p-ger .ic3{width:5px;margin-left:-10px}
.two{padding-top:15px}
.p-fase .big{width:53px}
.p-v .big:first-child{width:69px}.p-v .big{width:101px}
.optbar{height:33px;flex:none;background:#eee}

/* properties palette */
.work{height:794px;flex:none;display:flex;border-top:2px solid #c8c8c8;background:#c8c8c8}
h5{font-size:14px;line-height:24px;height:24px;color:#3a3a3a;white-space:nowrap}
.props{width:430px;background:#eee;display:flex;flex-direction:column;padding-left:2px;flex:none}
.props h5{padding-left:2px;line-height:26px}
.type{width:425px;height:88px;border:1px solid #cfcfcf;border-bottom:0;background:#f0f0f0;display:flex;align-items:center;padding:0 3px 0 2px;flex:none}
.thumb{width:82px;height:82px;border:1px solid #cfcfcf;display:grid;place-items:center}
.thumb svg{width:38px;height:38px}
.type span{margin-left:6px;color:#444;flex:1;letter-spacing:.15px}
.inst{height:30px;display:flex;align-items:center;flex:none;color:#222}
.sel{width:320px;height:28px;border:1px solid #adadad;background:#e1e1e1;display:flex;justify-content:space-between;align-items:center;padding:0 2px 0 4px;color:#111}
.sel svg{width:16px;height:16px;color:#555}
.et{width:17px;height:17px;margin:-3px 5px 0 5px}
.inst span{margin-top:-3px}
.pscroll{height:617px;overflow:hidden;display:flex;flex:none;background:#fff;margin-right:4px}
.rows{width:404px;height:630px;color:#111}
.gh{height:24px;background:#dbdbdb;display:flex;justify-content:space-between;padding:2px 4px 0 2px;line-height:19px}
.gh svg{width:11px;height:11px}
.r{height:24px;display:grid;grid-template-columns:195px 194px 15px;border-bottom:1px dotted #555;line-height:21px;white-space:nowrap}
.r span{padding-left:10px;border-right:1px dotted #555;overflow:hidden}
.r b{font-weight:400;padding:0 0 1px 2px;border-right:1px dotted #555;display:flex;align-items:center;height:23px;line-height:20px}
.r i{border-right:1px dotted #555}
.r em{font-style:normal;width:192px;height:22px;margin:1px 0 0 -1px;border:1px solid #a0a0a0;border-right-width:2px;border-bottom-width:2px;background:#e1e1e1;text-align:center;line-height:19px;flex:none;color:#222}
.r u{width:16px;height:16px;border:1px solid #333;margin-left:1px;text-decoration:none}
.r .edit{border:1px solid #111;padding-left:6px}
.off{color:#808080}
.off u{border-color:#ccc}
.sb{width:20px;background:#f0f0f0;margin-left:auto;display:flex;flex-direction:column;align-items:center}
.sb svg{width:16px;height:21px;color:#555}
.sb .th{width:19px;height:407px;background:#cdcdcd;margin-bottom:auto}
.pfoot{height:33px;display:flex;justify-content:space-between;padding:2px 5px 0 2px}
.pfoot a{color:#2869b4;text-decoration:underline;letter-spacing:.22px;line-height:21px}
.pfoot button{width:86px;height:26px;background:#cdcdcd;border:1px solid #bfbfbf;color:#868686}

/* drawing view */
.view{width:1058px;margin-left:2px;display:flex;flex-direction:column;background:#c8c8c8;flex:none}
.vtabs{height:25px;display:flex;justify-content:space-between;padding-right:4px;flex:none}
.vtab{width:160px;background:#fff;display:flex;align-items:center;padding:0 2px 0 5px}
.vtab svg{width:20px;height:20px}
.vtab span{font-size:14px;font-weight:600;color:#bfbfbf;margin-left:10px;flex:1}
.vtab .vx{width:22px;height:20px;color:#333}
.more{margin-right:-5px;width:24px}
.canvas{height:743px;display:flex;background:#fff;margin-right:3px}
.draw{flex:1;position:relative}
.viewcube{position:absolute;left:885px;top:52px;width:130px;height:115px}
.soft{filter:blur(5px)}
.ct{font-size:9px;font-weight:700;fill:#aaa;font-family:"Noto Sans",sans-serif}
.up{font-size:12px}
.cp{font-size:13px;font-weight:700;fill:#bbb}
.navbar{position:absolute;left:999px;top:173px;width:36px;height:118px}
.vsb{width:21px;background:#eee;display:flex;flex-direction:column;align-items:center;padding-top:3px}
.vsb svg{width:18px;height:21px;color:#444}
.vsb div{width:19px;height:21px;background:#cdcdcd;margin:338px 0 auto}
.vcb{height:22px;background:#eee;display:flex;align-items:center;margin-right:3px}
.vcb>span{width:94px;padding-left:29px;white-space:nowrap;font-size:13.500px}
.vic{display:flex;gap:4.850px}
.vic svg{width:20px;height:20px}
.vic .bl{margin-left:-4px;margin-right:4px}
.ch{width:15px;height:15px;margin-left:6px}
.hth{width:21px;height:17px;background:#cdcdcd;margin-left:269px}
.hth+.ch{margin-left:268px}
.grip{width:12px;height:12px;margin-left:11px}

/* project browser */
.browser{position:relative;width:428px;margin-left:2px;background:#eee;padding:0 1px 3px 2px;border-left:1px solid #eee}
.browser h5{padding-left:2px;line-height:25px;letter-spacing:.13px}
.tree{height:765px;padding-top:1px;background:#fff;list-style:none;color:#111}
.tree li{height:22px;display:flex;align-items:center;white-space:nowrap;letter-spacing:.12px}
.tree li svg{width:20px;height:20px}
.tree s{width:13px;height:13px;border:1px solid #8a8a8a;text-decoration:none;background:linear-gradient(#3c5a9a,#3c5a9a) 50% 50%/9px 1px no-repeat,linear-gradient(#3c5a9a,#3c5a9a) 50% 50%/1px 9px no-repeat,#f8f8f8;flex:none;position:relative;z-index:1}
.tree s.m{background:linear-gradient(#3c5a9a,#3c5a9a) 50% 50%/9px 1px no-repeat,#f8f8f8}
.l0{padding-left:4px}
.l0 svg{margin:0 3px 0 9px}
.leaf{padding-left:17px}
.l1{padding-left:30px}
.l1 span{margin-left:12px}
.l2{padding-left:78px}
.l2 span{margin-left:3px}
.tree span{padding:0 3px}
.hl{background:#e3e3e3}
.guides{position:absolute;left:2px;top:25px;width:80px;height:330px}

/* status bar */
.status{height:32px;flex:none;background:#cbcbcb;display:flex;align-items:center}
.status svg{width:21px;height:21px}
.ready{width:672px;padding:2px 0 0 2px;color:#222}
.cb{width:254px;height:22px;background:#fff;margin-left:8px;display:flex;align-items:center;padding:0 2px;color:#777;justify-content:flex-end}
.cb svg{width:14px;height:14px;color:#999}
.two.cb{justify-content:space-between;margin-left:8px;letter-spacing:.1px}
.g1{margin-left:8px}
.n0{margin-left:4px;width:36px;padding-top:3px}
.sq{width:20px;height:21px;background:#a0a0a0;border-radius:2px;margin-right:9px}
.sr{display:flex;margin-left:295px;gap:9px;align-items:center}
.sr span{margin-left:-8px}

/* taskbar */
.taskbar{height:38px;flex:none;background:#101010;display:flex;color:#fff}
.start{width:628px;display:flex;gap:25px;padding:9px 0 0 12px}
.start svg{width:20px;height:20px}
.apps{display:flex}
.apps>div{width:45.950px;display:grid;place-items:center}
.apps svg{width:21px;height:21px}
.run{background:linear-gradient(#76b9ed,#76b9ed) 50% 100%/35px 3px no-repeat}
.run.on{background:linear-gradient(#76b9ed,#76b9ed) 50% 100%/46px 3px no-repeat,#333}
.ad{width:18px;height:21px;text-align:center;color:#fff;display:flex;flex-direction:column;border-left:3px solid #ff7393}
.ad b{font-size:12px;line-height:14px}
.ad small{font-size:5px;line-height:7px;font-weight:700}
.red{background:linear-gradient(#e01650 0 66%,#7a0c2e 66%)}
.blue{background:linear-gradient(#1f6cf0 0 66%,#0b3f95 66%);border-color:#6da3f5}
.tray{display:flex;align-items:center;margin-left:344px;gap:10px}
.tray svg{width:20px;height:20px}
.por{margin-left:2px;width:36px}
.clk{width:47px}

/* line weights dialog */
.dialog{position:absolute;z-index:5;left:595px;top:224px;width:732px;height:760px;background:#f0f0f0;border:1px solid #666;box-shadow:0 3px 16px rgba(0,0,0,.45);font:13px/16px "DejaVu Sans Condensed","Noto Sans",sans-serif;color:#111;display:flex;flex-direction:column}
.dt{height:37px;background:#fff;display:flex;justify-content:space-between;align-items:center;padding:0 12px 0 8px;font:14px/20px "Noto Sans",sans-serif;flex:none}
.dt svg{width:18px;height:18px}
.dtabs{display:grid;grid-template-columns:200px 209px 204px;padding-left:6px;height:31px;align-items:end;white-space:nowrap;font-size:12.600px;flex:none}
.dtabs span{height:21px;border:1px solid #dcdcdc;border-left:0;padding-left:3px;line-height:21px;border-bottom:0}
.dtabs span:nth-child(3){padding-left:6px}
.dtabs .on{height:24px;background:#fff;border-left:1px solid #dcdcdc;padding-left:7px;line-height:23px}
.page{width:715px;height:645px;margin-left:6px;border:1px solid #dcdcdc;background:#fff;padding:12px 0 0 15px;flex:none}
.page p{margin:0 0 8px 2px;white-space:nowrap;font-size:12.700px}
.gridrow{display:flex;margin-top:16px}
table{border-collapse:collapse;table-layout:fixed;width:567px;margin-left:-1px;font:14px/20px "Noto Sans",sans-serif;border-top:2px solid #555;border-left:2px solid #555;flex:none}
th{font-weight:400;background:#f0f0f0;border:solid #000;border-width:0 1px 2px 0;padding:0;text-align:left}
thead th{height:28px;width:81px;text-align:center;padding-left:8px}
th:first-child{width:79px}
tbody th{height:24px;padding:0 0 2px 2px}
td{height:24px;border:1px dotted #777;padding:0 0 2px 2px;white-space:nowrap}
.last th,.last td{height:137px;vertical-align:top;padding-top:0}
.side{display:flex;flex-direction:column;gap:8px;margin-left:15px}
.side button,.dfoot button{border:1px solid #adadad;background:#e1e1e1;width:103px;height:28px}
.dfoot{display:flex;gap:8.500px;padding:10px 0 0 353px}
.dfoot button{width:86px;height:27px}
.dfoot .def{border:2px solid #0078d7}
.dgrip{position:absolute;right:2px;bottom:3px;width:11px;height:11px}

/* pen marks over the whole screen */
.ink{position:absolute;z-index:10;left:0;top:0;width:1920px;height:1080px;fill:none;stroke-width:6.500;stroke-linecap:round;stroke-linejoin:round;pointer-events:none}
```
